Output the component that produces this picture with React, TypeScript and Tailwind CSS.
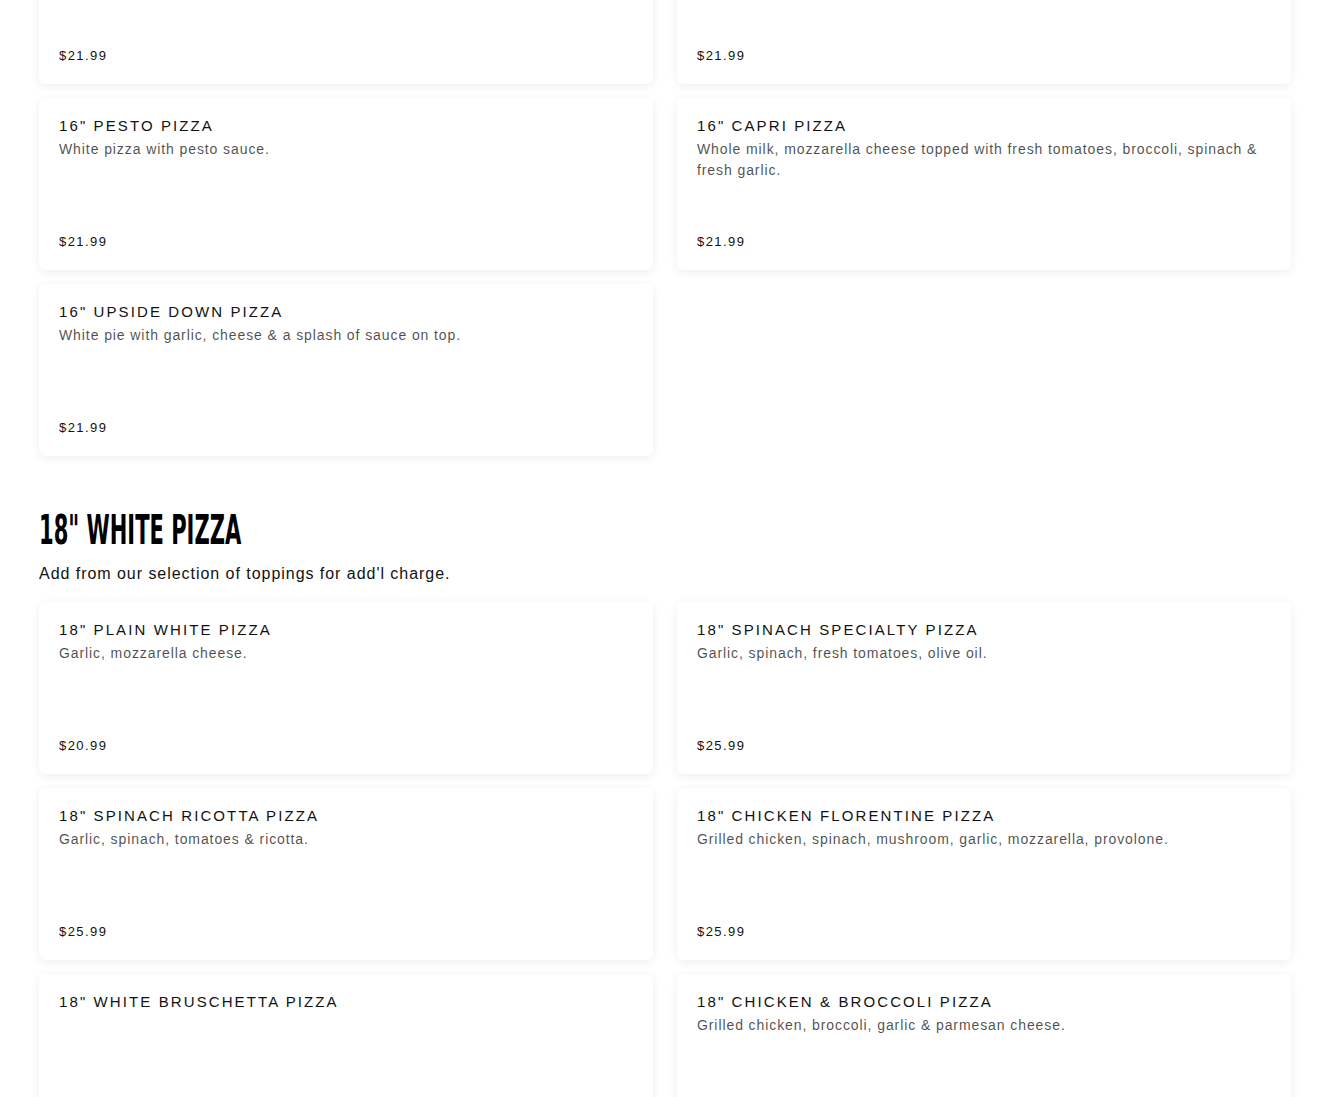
import React from "react";

type Item = { name?: string; desc?: string; price?: string };

// first row is scrolled past the top edge, only the prices show
const topItems: Item[] = [
  { price: "$21.99" },
  { price: "$21.99" },
  { name: '16" PESTO PIZZA', desc: "White pizza with pesto sauce.", price: "$21.99" },
  {
    name: '16" CAPRI PIZZA',
    desc: "Whole milk, mozzarella cheese topped with fresh tomatoes, broccoli, spinach & fresh garlic.",
    price: "$21.99",
  },
  { name: '16" UPSIDE DOWN PIZZA', desc: "White pie with garlic, cheese & a splash of sauce on top.", price: "$21.99" },
];

// last row runs past the bottom edge, prices are out of view
const whiteItems: Item[] = [
  { name: '18" PLAIN WHITE PIZZA', desc: "Garlic, mozzarella cheese.", price: "$20.99" },
  { name: '18" SPINACH SPECIALTY PIZZA', desc: "Garlic, spinach, fresh tomatoes, olive oil.", price: "$25.99" },
  { name: '18" SPINACH RICOTTA PIZZA', desc: "Garlic, spinach, tomatoes & ricotta.", price: "$25.99" },
  {
    name: '18" CHICKEN FLORENTINE PIZZA',
    desc: "Grilled chicken, spinach, mushroom, garlic, mozzarella, provolone.",
    price: "$25.99",
  },
  { name: '18" WHITE BRUSCHETTA PIZZA' },
  { name: '18" CHICKEN & BROCCOLI PIZZA', desc: "Grilled chicken, broccoli, garlic & parmesan cheese." },
];

const MenuCard = ({ item }: { item: Item }) => (
  <div className="bg-white rounded-md shadow-[0_2px_10px_rgba(0,0,0,0.07)] h-[172px] px-5 pt-[18px] pb-[19px] flex flex-col">
    {item.name && <h3 className="text-[15px] leading-5 tracking-[0.14em] text-[#121212]">{item.name}</h3>}
    {item.desc && (
      <p className="mt-[3px] text-[14px] leading-[21px] tracking-[0.065em] text-[#121212]/75">{item.desc}</p>
    )}
    {item.price && (
      <p className="mt-auto text-[13px] leading-[18px] tracking-[0.11em] text-[#121212]">{item.price}</p>
    )}
  </div>
);

export default function App() {
  return (
    <div
      className="bg-white h-[1097px] overflow-hidden px-[39px]"
      style={{ fontFamily: '"Liberation Sans", Arial, sans-serif' }}
    >
      <div className="-mt-[88px] grid grid-cols-2 gap-x-6 gap-y-[14px]">
        {topItems.map((it, i) => (
          <MenuCard key={i} item={it} />
        ))}
      </div>

      <h2
        className="mt-[52px] h-[44px] text-[41px] leading-[44px] font-bold text-black scale-x-[0.57] origin-left whitespace-nowrap"
        style={{ fontFamily: '"Liberation Sans Narrow", "DejaVu Sans Condensed", sans-serif' }}
      >
        18" WHITE PIZZA
      </h2>
      <p className="mt-[12px] text-[16px] leading-5 tracking-[0.06em] text-[#121212]">
        Add from our selection of toppings for add'l charge.
      </p>

      <div className="mt-[18px] grid grid-cols-2 gap-x-6 gap-y-[14px]">
        {whiteItems.map((it) => (
          <MenuCard key={it.name} item={it} />
        ))}
      </div>
    </div>
  );
}
